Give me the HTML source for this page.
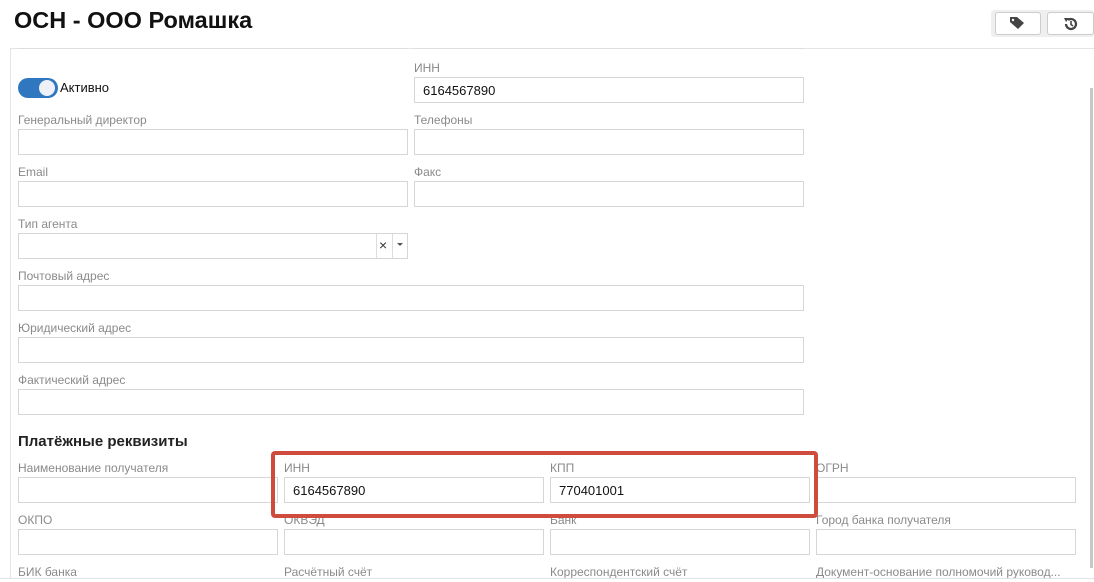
<!DOCTYPE html>
<html><head><meta charset="utf-8"><style>
*{box-sizing:border-box}
body{margin:0;width:1094px;height:582px;overflow:hidden;background:#fff;font-family:"Liberation Sans","DejaVu Sans",sans-serif;position:relative}
.a{position:absolute}
.lbl{position:absolute;font-size:12px;color:#8a8a8a}
.inp{position:absolute;height:26px;border:1px solid #d6d6d6;background:#fff;font-size:13px;color:#111;padding:5px 8px}
</style></head><body>
<div class="a" style="left:14px;top:7px;font-size:23.5px;font-weight:bold;color:#111">ОСН - ООО Ромашка</div>
<div class="a" style="left:991px;top:10px;width:103px;height:27px;background:#efefef;border-radius:3px"></div>
<div class="a" style="left:995px;top:12px;width:46px;height:23px;background:#fff;border:1px solid #ccc;border-radius:3px"></div>
<svg class="a" style="left:1008px;top:15px" width="20" height="16" viewBox="0 0 20 16"><path d="M2 2h7l7 6-6 6-8-7z" fill="#444"/><circle cx="5" cy="5" r="1.2" fill="#fff"/></svg>
<div class="a" style="left:1047px;top:12px;width:47px;height:23px;background:#fff;border:1px solid #ccc;border-radius:3px"></div>
<svg class="a" style="left:1063px;top:16px" width="16" height="16" viewBox="0 0 16 16"><path d="M3 8a5 5 0 1 0 2-4" stroke="#444" stroke-width="2.2" fill="none"/><path d="M1 2l5 0-3 4z" fill="#444"/><path d="M8 5v3.5l2 1.5" stroke="#444" stroke-width="1.6" fill="none"/></svg>
<div class="a" style="left:10px;top:48px;width:1084px;height:534px;border-left:1px solid #e4e4e4;border-top:1px solid #e4e4e4"></div>
<div class="a" style="left:18px;top:46px;width:390px;height:3px;border-bottom:1px solid #ddd"></div>
<div class="a" style="left:414px;top:46px;width:390px;height:3px;border-bottom:1px solid #ddd"></div>
<div class="a" style="left:1090px;top:88px;width:3px;height:480px;background:#c8c8c8"></div>
<div class="a" style="left:18px;top:78px;width:40px;height:20px;background:#2f78bf;border-radius:10px"></div>
<div class="a" style="left:39px;top:80px;width:16px;height:16px;background:#eef2f8;border-radius:50%"></div>
<div class="a" style="left:60px;top:80px;font-size:13px;color:#111">Активно</div>
<div class="lbl" style="left:414px;top:61px">ИНН</div><div class="inp" style="left:414px;top:77px;width:390px">6164567890</div>
<div class="lbl" style="left:18px;top:113px">Генеральный директор</div><div class="inp" style="left:18px;top:129px;width:390px"></div>
<div class="lbl" style="left:414px;top:113px">Телефоны</div><div class="inp" style="left:414px;top:129px;width:390px"></div>
<div class="lbl" style="left:18px;top:165px">Email</div><div class="inp" style="left:18px;top:181px;width:390px"></div>
<div class="lbl" style="left:414px;top:165px">Факс</div><div class="inp" style="left:414px;top:181px;width:390px"></div>
<div class="lbl" style="left:18px;top:217px">Тип агента</div><div class="inp" style="left:18px;top:233px;width:390px"></div>
<div class="a" style="left:376px;top:234px;width:1px;height:24px;background:#ddd"></div>
<div class="a" style="left:392px;top:234px;width:1px;height:24px;background:#ddd"></div>
<div class="a" style="left:379px;top:237px;font-size:14px;color:#333">×</div>
<div class="a" style="left:397px;top:243px;border:3px solid transparent;border-top:3px solid #555"></div>
<div class="lbl" style="left:18px;top:269px">Почтовый адрес</div><div class="inp" style="left:18px;top:285px;width:786px"></div>
<div class="lbl" style="left:18px;top:321px">Юридический адрес</div><div class="inp" style="left:18px;top:337px;width:786px"></div>
<div class="lbl" style="left:18px;top:373px">Фактический адрес</div><div class="inp" style="left:18px;top:389px;width:786px"></div>
<div class="a" style="left:18px;top:433px;font-size:15px;font-weight:bold;color:#222">Платёжные реквизиты</div>
<div class="lbl" style="left:18px;top:461px">Наименование получателя</div><div class="inp" style="left:18px;top:477px;width:260px"></div>
<div class="lbl" style="left:284px;top:461px">ИНН</div><div class="inp" style="left:284px;top:477px;width:260px">6164567890</div>
<div class="lbl" style="left:550px;top:461px">КПП</div><div class="inp" style="left:550px;top:477px;width:260px">770401001</div>
<div class="lbl" style="left:816px;top:461px">ОГРН</div><div class="inp" style="left:816px;top:477px;width:260px"></div>
<div class="lbl" style="left:18px;top:513px">ОКПО</div><div class="inp" style="left:18px;top:529px;width:260px"></div>
<div class="lbl" style="left:284px;top:513px">ОКВЭД</div><div class="inp" style="left:284px;top:529px;width:260px"></div>
<div class="lbl" style="left:550px;top:513px">Банк</div><div class="inp" style="left:550px;top:529px;width:260px"></div>
<div class="lbl" style="left:816px;top:513px">Город банка получателя</div><div class="inp" style="left:816px;top:529px;width:260px"></div>
<div class="lbl" style="left:18px;top:565px">БИК банка</div>
<div class="lbl" style="left:284px;top:565px">Расчётный счёт</div>
<div class="lbl" style="left:550px;top:565px">Корреспондентский счёт</div>
<div class="lbl" style="left:816px;top:565px">Документ-основание полномочий руковод...</div>
<div class="a" style="left:0;top:578px;width:1094px;height:4px;background:#fff;border-top:1px solid #e4e4e4"></div>
<div class="a" style="left:271px;top:451px;width:547px;height:67px;border:4px solid #cf4b3e;border-radius:4px"></div>
</body></html>
